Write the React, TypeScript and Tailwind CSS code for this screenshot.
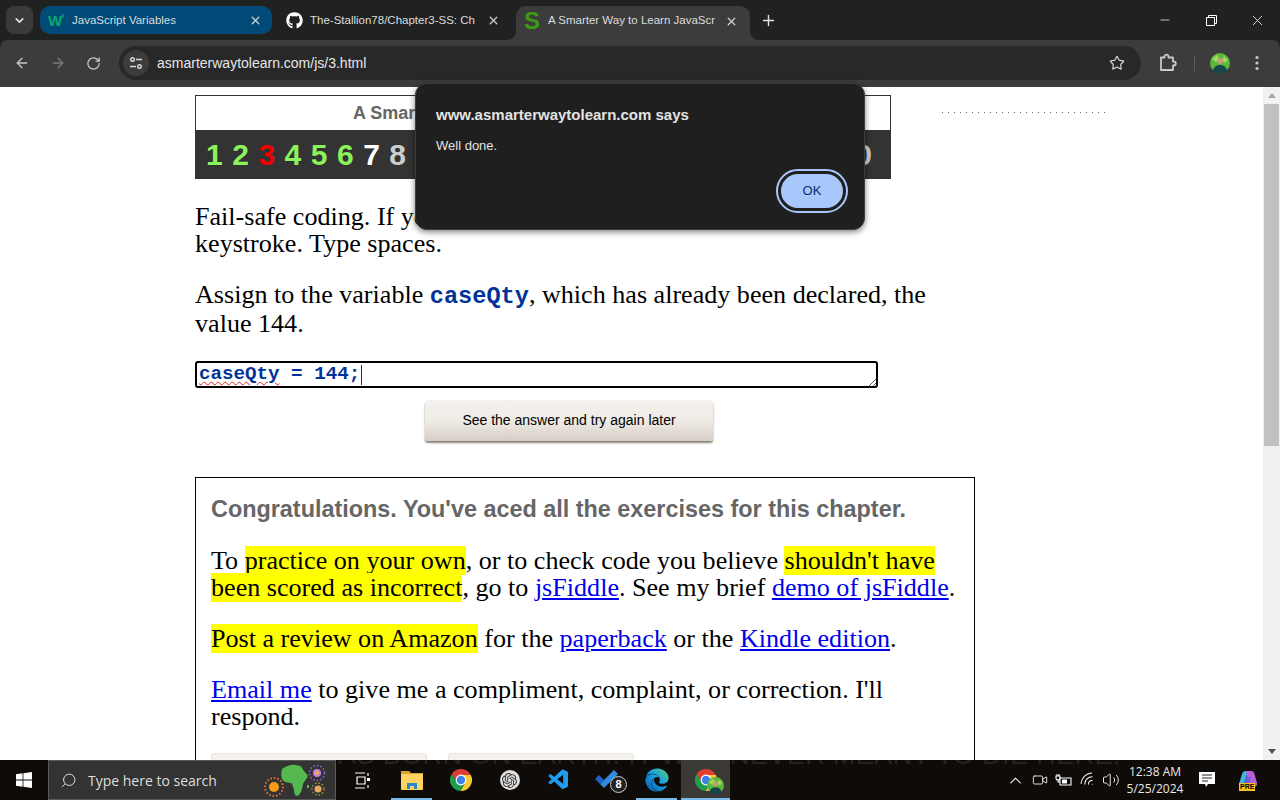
import { ArrowLeft, ArrowRight, ChevronDown, ChevronUp, Minus, Plus, RotateCw, Search, Star, Video, Volume2, Wifi, X } from 'lucide-react';
import { FaEdge, FaGithub } from 'react-icons/fa';
import { SiOpenai } from 'react-icons/si';
import { VscVscode } from 'react-icons/vsc';

const sans = "font-['Liberation_Sans',Arial,sans-serif]";
const serif = "font-['Liberation_Serif',serif]";
const winFont = "font-['Open_Sans',sans-serif]";

function ChromeLogo({ size = 24 }: { size?: number }) {
  return (
    <svg width={size} height={size} viewBox="0 0 24 24">
      <path d="M2.77 6.01A11 11 0 0 1 21.8 7H12L7.67 14.5z" fill="#dd3f33" />
      <path d="M21.8 7A11 11 0 0 1 11.43 22.99L16.33 14.5 12 7z" fill="#fcc934" />
      <path d="M11.43 22.99A11 11 0 0 1 2.77 6.01L7.67 14.5h8.66z" fill="#1f9d4d" />
      <circle cx="12" cy="12" r="5.4" fill="#fff" />
      <circle cx="12" cy="12" r="4.2" fill="#3f80ea" />
    </svg>
  );
}

function Avatar({ size = 20 }: { size?: number }) {
  return (
    <svg width={size} height={size} viewBox="0 0 20 20">
      <circle cx="10" cy="10" r="10" fill="#5cb83a" />
      <path d="M2 6 7 2l3 4-4 3zM14 3l4 4-3 3-3-3z" fill="#9bdc5a" />
      <circle cx="10" cy="8" r="3" fill="#c99a7a" />
      <path d="M3 18c1-5 4-6 7-6s6 1 7 6a10 10 0 0 1-14 0z" fill="#17454a" />
    </svg>
  );
}

function Tab({ title, className, icon, textClass }: { title: string; className: string; icon: React.ReactNode; textClass: string }) {
  return (
    <div className={`relative flex items-center ${className}`}>
      <div className="flex h-4 w-5 shrink-0 items-center justify-center">{icon}</div>
      <span className={`flex-1 overflow-hidden whitespace-nowrap text-[11.5px] text-[#dcdcdc] ${textClass}`}>{title}</span>
      <X size={13} strokeWidth={2.4} className="shrink-0 text-[#cfcfcf]" />
    </div>
  );
}

function TabStrip() {
  return (
    <div className={`flex h-10 shrink-0 items-end bg-[#202222] pl-[6px] ${sans}`}>
      <div className="mb-[6px] mr-[7px] flex h-[28px] w-[27px] items-center justify-center rounded-[8px] bg-[#3a3a3a]">
        <ChevronDown size={13} strokeWidth={3} className="text-[#e4e4e4]" />
      </div>
      <Tab
        className="mb-[6px] h-[28px] w-[232px] rounded-[10px] bg-[#004a77] pl-[5px] pr-[10px] pt-px"
        textClass="ml-[7px]"
        title="JavaScript Variables"
        icon={
          <span className="relative text-[15px] font-bold leading-none text-[#04aa6d]">
            W<span className="absolute left-[13px] top-0 text-[6px] leading-none">3</span>
          </span>
        }
      />
      <Tab
        className="mb-[6px] h-[28px] w-[244px] pl-[12px] pr-[16px] pt-px"
        textClass="ml-[6px] mr-[8px]"
        title="The-Stallion78/Chapter3-SS: Ch"
        icon={<FaGithub size={17} className="text-white" />}
      />
      <Tab
        className="h-[34px] w-[234px] rounded-t-[10px] bg-[#3c3c3c] pb-[4px] pl-[6px] pr-[12px]"
        textClass="ml-[6px] mr-[8px]"
        title="A Smarter Way to Learn JavaScr"
        icon={
          <>
            <span className="text-[24px] font-bold leading-none text-[#3f9b12]">S</span>
            <span className="absolute bottom-0 left-[-8px] h-2 w-2 bg-[radial-gradient(circle_at_0_0,transparent_7.5px,#3c3c3c_8px)]" />
            <span className="absolute bottom-0 right-[-8px] h-2 w-2 bg-[radial-gradient(circle_at_100%_0,transparent_7.5px,#3c3c3c_8px)]" />
          </>
        }
      />
      <div className="mb-[6px] ml-[4px] flex h-7 w-7 items-center justify-center">
        <Plus size={17} className="text-[#e0e0e0]" />
      </div>
      <div className="flex-1" />
      <div className="flex h-10 self-start">
        <div className="flex h-10 w-[46px] items-center justify-center"><Minus size={14} strokeWidth={1.2} className="text-white" /></div>
        <div className="flex h-10 w-[46px] items-center justify-center">
          <svg width="11" height="11" viewBox="0 0 11 11" fill="none" stroke="#fff">
            <path d="M.5 2.500h8v8h-8zM2.500 2.500v-2h8v8h-2" />
          </svg>
        </div>
        <div className="flex h-10 w-[46px] items-center justify-center"><X size={17} strokeWidth={1.1} className="text-white" /></div>
      </div>
    </div>
  );
}

function Toolbar() {
  return (
    <div className="bg-[#202222]">
      <div className={`flex h-[47px] shrink-0 items-start rounded-t-[8px] bg-[#3c3c3c] pl-[14px] pt-[6px] ${sans}`}>
        <div className="flex h-[34px] items-center gap-[20px]">
          <ArrowLeft size={16} className="text-[#c9c9c9]" />
          <ArrowRight size={16} className="text-[#7c7c7c]" />
          <RotateCw size={15} className="text-[#c9c9c9]" />
        </div>
        <div className="ml-[18px] flex h-[34px] w-[1022px] items-center rounded-full bg-[#282828] pl-[4px] pr-[16px]">
          <div className="flex h-[26px] w-[26px] items-center justify-center rounded-full bg-[#3c3c3c]">
            <svg width="14" height="14" viewBox="0 0 14 14" fill="none" stroke="#d8d8d8" strokeWidth="1.4">
              <circle cx="3.500" cy="3.500" r="1.800" />
              <path d="M7 3.500h6M1 10.500h6" />
              <circle cx="10.500" cy="10.500" r="1.800" />
            </svg>
          </div>
          <span className="ml-[8px] flex-1 text-[14px] text-[#e6e6e6]">asmarterwaytolearn.com/js/3.html</span>
          <Star size={16} strokeWidth={1.8} className="text-[#d0d0d0]" />
        </div>
        <div className="flex h-[34px] flex-1 items-center pl-[17px]">
          <svg width="20" height="20" viewBox="0 0 20 20" fill="none" stroke="#c9c9c9" strokeWidth="1.8" strokeLinejoin="round">
            <path d="M3 4.500h3.500V3.700a2 2 0 0 1 4 0v.8H15v4h.8a2 2 0 0 1 0 4H15V17H3z" />
          </svg>
          <div className="ml-[16px] h-4 w-px bg-[#5c5c5c]" />
          <div className="ml-[15px]"><Avatar /></div>
          <svg width="4" height="16" viewBox="0 0 4 16" fill="#c9c9c9" className="ml-[25px]">
            <circle cx="2" cy="2.500" r="1.600" />
            <circle cx="2" cy="8" r="1.600" />
            <circle cx="2" cy="13.500" r="1.600" />
          </svg>
        </div>
      </div>
    </div>
  );
}

function Page() {
  const nums: [string, string][] = [
    ['1', 'text-[#8cf25c]'], ['2', 'text-[#8cf25c]'], ['3', 'text-[#f00000]'], ['4', 'text-[#8cf25c]'],
    ['5', 'text-[#8cf25c]'], ['6', 'text-[#8cf25c]'], ['7', 'text-white'], ['8', 'text-[#cccccc]'],
  ];
  return (
    <div className={`flex h-full overflow-hidden pl-[195px] pt-2 ${serif} text-[26.1px] leading-[27px] text-black`}>
      <div className="w-[747px] shrink-0">
        <div className="w-[696px] border border-[#333333]">
          <div className={`flex h-[34px] items-center pl-[157px] ${sans} text-[18px] font-bold text-[#666666]`}>A Smarter Way</div>
          <div className={`flex h-[48px] items-center justify-between bg-[#333333] pl-[10px] pr-[18px] ${sans} text-[30px] font-bold`}>
            <div className="flex gap-[9.5px]">
              {nums.map(([n, c]) => (
                <span key={n} className={c}>{n}</span>
              ))}
            </div>
            <span className="text-[#cccccc]">0</span>
          </div>
        </div>

        <p className="mt-[24px] w-[780px]">Fail-safe coding. If you make a mistake, start over. Check every<br />keystroke. Type spaces.</p>
        <p className="mt-[24px] w-[780px]">
          Assign to the variable <code className="font-['Liberation_Mono',monospace] text-[23.6px] font-bold text-[#003399]">caseQty</code>, which has already been declared, the<br />value 144.
        </p>

        <div className="relative mt-[24px] flex h-[27px] w-[683px] items-center rounded-[3px] border-2 border-black pl-[2px] font-['Liberation_Mono',monospace] text-[19.2px] font-bold text-[#003399]">
          <span className="underline decoration-wavy decoration-[#e02020] decoration-1 underline-offset-2">caseQty</span>
          <span className="whitespace-pre"> = 144;</span>
          <span className="ml-px h-[20px] w-px bg-[#003399]" />
          <svg width="7" height="7" viewBox="0 0 7 7" stroke="#555" className="absolute bottom-0 right-0">
            <path d="M0 7 7 0M4 7l3-3" />
          </svg>
        </div>

        <div className="mt-[12px] flex w-[748px] justify-center">
          <div className={`flex h-[41px] w-[288px] items-center justify-center rounded-[3px] bg-gradient-to-b from-[#f4f1ee] via-[#efebe6] to-[#d6cec5] shadow-[0_2px_2px_#8a8378] ${sans} text-[14px] text-black`}>
            See the answer and try again later
          </div>
        </div>

        <div className="mt-[36px] w-[780px] border border-black px-[15px] pt-[18px]">
          <p className={`${sans} text-[23.4px] font-bold leading-[27px] text-[#666666]`}>Congratulations. You've aced all the exercises for this chapter.</p>
          <p className="mt-[24px]">
            To <mark className="bg-[#ffff00]">practice on your own</mark>, or to check code you believe <mark className="bg-[#ffff00]">shouldn't have</mark><br />
            <mark className="bg-[#ffff00]">been scored as incorrect</mark>, go to <span className="text-[#0000ee] underline">jsFiddle</span>. See my brief <span className="text-[#0000ee] underline">demo of jsFiddle</span>.
          </p>
          <p className="mt-[24px]">
            <mark className="bg-[#ffff00]">Post a review on Amazon</mark> for the <span className="text-[#0000ee] underline">paperback</span> or the <span className="text-[#0000ee] underline">Kindle edition</span>.
          </p>
          <p className="mt-[24px]">
            <span className="text-[#0000ee] underline">Email me</span> to give me a compliment, complaint, or correction. I'll<br />respond.
          </p>
          <div className="mt-[23px] flex gap-[21px]">
            <div className="h-10 w-[216px] rounded-[3px] border border-[#e8e4df] bg-[#f4f1ee]" />
            <div className="h-10 w-[186px] rounded-[3px] border border-[#e8e4df] bg-[#f4f1ee]" />
          </div>
        </div>
      </div>
      <div className="mt-[17px] h-px w-[166px] bg-[repeating-linear-gradient(90deg,#666666_0_1px,transparent_1px_6px)]" />
    </div>
  );
}

function Scrollbar() {
  return (
    <div className="flex w-[17px] shrink-0 flex-col items-center bg-[#f1f1f1]">
      <div className="mt-[6px] h-0 w-0 border-x-[4px] border-b-[5px] border-x-transparent border-b-[#a3a3a3]" />
      <div className="mt-[6px] h-[342px] w-[15px] bg-[#c1c1c1]" />
      <div className="flex-1" />
      <div className="mb-[6px] h-0 w-0 border-x-[4px] border-t-[5px] border-x-transparent border-t-[#505050]" />
    </div>
  );
}

function Dialog() {
  return (
    <div className={`absolute left-[415px] top-[83px] flex h-[147px] w-[450px] flex-col rounded-[12px] border border-[#3c3c3c] bg-[#1f1f1f] pl-[20px] pr-[19px] pt-[21px] shadow-[0_2px_6px_rgba(0,0,0,0.5)] ${sans}`}>
      <div className="text-[15px] font-bold leading-[20px] text-[#e3e3e3]">www.asmarterwaytolearn.com says</div>
      <div className="mt-[12px] text-[13px] leading-[18px] text-[#e3e3e3]">Well done.</div>
      <div className="mt-[17px] flex justify-end">
        <div className="flex h-[38px] w-[66px] items-center justify-center rounded-full border-2 border-[#1f1f1f] bg-[#a8c7fa] text-[13px] text-[#062e6f] outline-2 outline-offset-[1px] outline-[#a8c7fa]">OK</div>
      </div>
    </div>
  );
}

function SearchArt() {
  return (
    <svg width="72" height="40" viewBox="0 0 72 40" className="shrink-0">
      <path d="M19 9c4-3 10-5 14-4 2 1 5 0 6 3 1 2 4 5 6 8-1 3-4 5-5 8-1 5-2 11-6 12-2 0-3-3-3-6-1-3-1-5-3-7-3 0-7-1-9-4-1-3-1-7 0-10z" fill="#54b94e" />
      <circle cx="11" cy="27" r="5" fill="#f59b1e" />
      <circle cx="11" cy="27" r="9" fill="none" stroke="#e2703a" strokeWidth="2" strokeDasharray="1.500 2" />
      <circle cx="54" cy="13" r="4" fill="#c77fe0" />
      <circle cx="54" cy="13" r="2" fill="#f0b040" />
      <circle cx="54" cy="13" r="7.500" fill="none" stroke="#9a5ed0" strokeWidth="1.600" strokeDasharray="1.500 2" />
      <circle cx="55" cy="29" r="3.500" fill="#e8a860" />
      <circle cx="55" cy="29" r="6" fill="none" stroke="#b09a40" strokeWidth="1.400" strokeDasharray="1.500 2" />
      <rect x="44" y="25" width="2" height="3" fill="#54b94e" />
    </svg>
  );
}

function TaskCell({ children, open, active }: { children: React.ReactNode; open?: boolean; active?: boolean }) {
  return (
    <div className={`relative flex h-10 w-[49px] items-center justify-center ${active ? 'bg-[#3b3936]' : ''}`}>
      {children}
      {open && <span className={`absolute bottom-0 h-[2px] bg-[#76b9ed] ${active ? 'inset-x-0' : 'inset-x-1'}`} />}
    </div>
  );
}

function Taskbar() {
  return (
    <div className={`relative flex h-10 shrink-0 items-center overflow-hidden bg-[#0e0b09] ${sans}`}>
      <div className={`absolute left-[338px] top-[-19px] whitespace-nowrap text-[27px] leading-[28px] tracking-[0.4px] text-[#262422] ${sans}`}>AS BORN ON EARTH. IT WAS NEVER MEANT TO DIE HERE.</div>
      <div className="relative flex h-10 w-[48px] items-center justify-center">
        <svg width="16" height="16" viewBox="0 0 16 16" fill="#fff">
          <path d="M0 2.200 6.600 1.300v6.300H0zM7.400 1.200 16 0v7.600H7.400zM0 8.400h6.600v6.300L0 13.800zM7.400 8.400H16V16l-8.600-1.200z" />
        </svg>
      </div>
      <div className="relative flex h-10 w-[288px] items-center border border-[#5a5a5a] bg-[#333333] pl-[11px]">
        <Search size={17} strokeWidth={1.3} className="-scale-x-100 text-[#e8e8e8]" />
        <span className={`ml-[11px] flex-1 ${winFont} text-[14px] text-[#dedede]`}>Type here to search</span>
        <SearchArt />
      </div>
      <div className="relative ml-[2px] flex">
        <TaskCell>
          <svg width="18" height="17" viewBox="0 0 18 17" fill="none" stroke="#fff" strokeWidth="1.2">
            <path d="M1 1h10M1 16h10M3 5h8v7H3zM14 1v3M14 13v3" />
            <rect x="13" y="6" width="3" height="3" fill="#fff" stroke="none" />
          </svg>
        </TaskCell>
        <TaskCell open>
          <svg width="22" height="20" viewBox="0 0 22 20">
            <path d="M0 1h8l2 2h12v4H0z" fill="#d9a52f" />
            <rect y="4" width="22" height="16" rx="1" fill="#fcd45f" />
            <path d="M6 19v-6h10v6h-3v-3H9v3z" fill="#2f83d1" />
          </svg>
        </TaskCell>
        <TaskCell><ChromeLogo /></TaskCell>
        <TaskCell>
          <div className="flex h-5 w-5 items-center justify-center rounded-full bg-[#e0e0e0]">
            <SiOpenai size={15} className="text-[#333333]" />
          </div>
        </TaskCell>
        <TaskCell><VscVscode size={24} className="text-[#1f9cf0]" /></TaskCell>
        <TaskCell>
          <svg width="24" height="20" viewBox="0 0 24 20" className="mb-[2px] mr-[4px]">
            <path d="M1 10 5 6l5 5-4 4z" fill="#1d5fc4" />
            <path d="M6 15 20 1l4 4-14 14z" fill="#2f8ae0" />
          </svg>
          <span className="absolute left-[27px] top-[16px] flex h-[17px] w-[17px] items-center justify-center rounded-full border border-[#cccccc] bg-[#222222] text-[11px] font-bold text-white">8</span>
        </TaskCell>
        <TaskCell open>
          <FaEdge size={24} fill="url(#edgeGrad)" />
          <svg width="0" height="0" className="absolute">
            <defs>
              <linearGradient id="edgeGrad" x1="0" y1="1" x2="1" y2="0">
                <stop offset="0" stopColor="#0b57a8" />
                <stop offset="0.55" stopColor="#1a9fe0" />
                <stop offset="1" stopColor="#58d06a" />
              </linearGradient>
            </defs>
          </svg>
        </TaskCell>
        <TaskCell open active>
          <ChromeLogo />
          <span className="absolute left-[26px] top-[17px]"><Avatar size={17} /></span>
        </TaskCell>
      </div>
      <div className="relative ml-auto flex h-10 items-center text-white">
        <div className="flex w-[24px] justify-center"><ChevronUp size={19} strokeWidth={1.3} /></div>
        <div className="flex w-[25px] justify-center"><Video size={16} strokeWidth={1.3} /></div>
        <div className="flex w-[23px] justify-center">
          <svg width="17" height="12" viewBox="0 0 17 12" fill="none" stroke="#fff" strokeWidth="1.1">
            <path d="M5 4h11v7H5z" />
            <path d="M7 5.500h5v4H7z" fill="#fff" stroke="none" />
            <path d="M2 0v2M4 0v2M1 2h4v2a2 2 0 0 1-4 0zM3 6v2h2" />
          </svg>
        </div>
        <div className="flex w-[25px] justify-center"><Wifi size={18} strokeWidth={1.3} className="-rotate-45" /></div>
        <div className="flex w-[22px] justify-center"><Volume2 size={18} strokeWidth={1.2} /></div>
        <div className={`flex w-[66px] flex-col items-center ${winFont} text-[12px] leading-[17px] text-[#e8e8e8]`}>
          <span>12:38 AM</span>
          <span>5/25/2024</span>
        </div>
        <div className="flex w-[38px] justify-center">
          <svg width="16" height="16" viewBox="0 0 16 16">
            <path d="M0 0h16v12H9l-2 3-1-3H0z" fill="#fff" />
            <path d="M3 3h10M3 6h10M3 9h6" stroke="#222" strokeWidth="1" />
          </svg>
        </div>
        <div className="relative flex w-[42px] justify-center">
          <svg width="20" height="18" viewBox="0 0 20 18">
            <path d="M2 13 5 3c.5-2 2-3 4-3h2L6 16H4c-2 0-2.500-1.500-2-3z" fill="#3fb6e8" />
            <path d="M9 0h5c2 0 3 1 3.500 3L20 12c.5 2-1 4-3 4h-5z" fill="#b860d8" />
            <path d="M6 16 9 6h5l-3 10z" fill="#6a5fe0" />
          </svg>
          <span className="absolute left-[13px] top-[12px] bg-[#f5c518] px-[1px] text-[7px] font-bold leading-[8px] text-black">PRE</span>
        </div>
        <div className="w-[12px]" />
      </div>
    </div>
  );
}

export default function App() {
  return (
    <div className="relative flex h-[800px] w-[1280px] flex-col overflow-hidden bg-white">
      <TabStrip />
      <Toolbar />
      <div className="flex min-h-0 flex-1">
        <div className="min-w-0 flex-1"><Page /></div>
        <Scrollbar />
      </div>
      <Taskbar />
      <Dialog />
    </div>
  );
}
